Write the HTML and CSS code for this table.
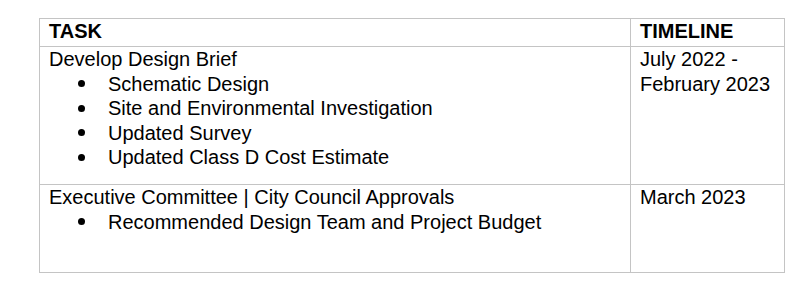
FILE: index.html
```html
<!DOCTYPE html>
<html>
<head>
<meta charset="utf-8">
<link rel="stylesheet" href="styles.css">
</head>
<body>
<div class="page">
  <table class="plan">
    <colgroup>
      <col class="col-task">
      <col class="col-time">
    </colgroup>
    <thead>
      <tr>
        <th>TASK</th>
        <th>TIMELINE</th>
      </tr>
    </thead>
    <tbody>
      <tr class="row-brief">
        <td>
          <div class="task">Develop Design Brief</div>
          <ul class="items">
            <li>Schematic Design</li>
            <li>Site and Environmental Investigation</li>
            <li>Updated Survey</li>
            <li>Updated Class D Cost Estimate</li>
          </ul>
        </td>
        <td>July 2022 -<br>February 2023</td>
      </tr>
      <tr class="row-approval">
        <td>
          <div class="task">Executive Committee | City Council Approvals</div>
          <ul class="items">
            <li>Recommended Design Team and Project Budget</li>
          </ul>
        </td>
        <td>March 2023</td>
      </tr>
    </tbody>
  </table>
</div>
</body>
</html>
```

FILE: styles.css
```css
html, body {
  margin: 0;
  padding: 0;
  background: #ffffff;
}

.page {
  padding: 18px 0 0 39px;
  font-family: "Liberation Sans", Arial, sans-serif;
  font-size: 20px;
  line-height: 24.5px;
  color: #000000;
}

.plan {
  border-collapse: collapse;
  width: 745px;
  table-layout: fixed;
}

.col-task { width: 591px; }
.col-time { width: 154px; }

.plan th,
.plan td {
  border: 1px solid #c4c4c4;
  padding: 0 9px;
  text-align: left;
  vertical-align: top;
}

.plan th {
  font-weight: bold;
  height: 27px;
}

.row-brief td { height: 137px; }
.row-approval td { height: 87px; }

.items {
  list-style: none;
  margin: 0;
  padding: 0;
}

.items li {
  display: grid;
  grid-template-columns: 59px 1fr;
}

.items li::before {
  content: "";
  width: 7px;
  height: 7px;
  border-radius: 50%;
  background: #000000;
  margin-left: 29px;
  align-self: center;
}
```
